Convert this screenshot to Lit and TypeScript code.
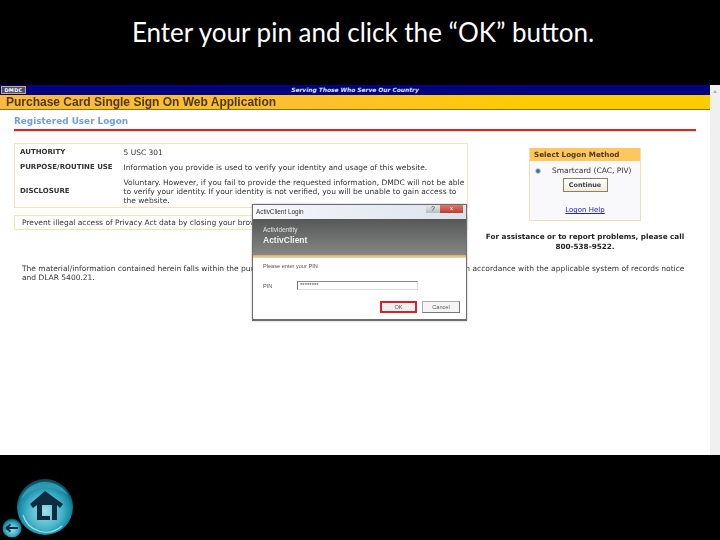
import { LitElement, html, css } from "lit";
import { customElement } from "lit/decorators.js";

@customElement("app-root")
export class AppRoot extends LitElement {
  static styles = css`
    :host { display: block; width: 720px; height: 540px; background: #000; overflow: hidden; position: relative; font-family: "DejaVu Sans", Verdana, sans-serif; }
    .title { height: 85px; box-sizing: border-box; padding: 15px 0 0 6px; text-align: center; color: #fff; font: 26px/34px Lato, sans-serif; }
    .shot { height: 370px; display: flex; background: #fff; position: relative; }
    .page { width: 710px; filter: blur(0.35px); color: #333; font-size: 7.5px; line-height: 9px; }
    .scroll { width: 10px; background: #f0f0f0; display: flex; justify-content: center; padding-top: 3px; box-sizing: border-box; }
    .scroll i { width: 0; height: 0; border: 2px solid transparent; border-bottom: 3px solid #b0b0b0; }
    .blue { height: 10px; background: #000080; display: flex; position: relative; justify-content: center; align-items: center; }
    .blue .slogan { font: italic bold 5.9px/10px "DejaVu Sans", sans-serif; color: #dfe6ff; }
    .dmdc { position: absolute; left: 1px; top: 1px; width: 25px; height: 8px; box-sizing: border-box; background: #4a4a90; border: 1px solid #c9b060; color: #fff; font: bold 5px/6px "DejaVu Sans", sans-serif; text-align: center; letter-spacing: .3px; }
    .yellow { height: 15px; box-sizing: border-box; background: linear-gradient(90deg, #fbb93f 0, #fdc02c 45%, #ffcc00 75%); border-bottom: 1px solid #85702a; padding-left: 6px; color: #4f3a0c; font: bold 12px/14px "Liberation Sans", sans-serif; }
    .heading { margin: 7px 14px 0 14px; height: 12px; border-bottom: 2px solid #cf2a2a; box-shadow: 0 1px 0 #e8e0c0; color: #6f9fd8; font-weight: 700; font-size: 8.9px; line-height: 9px; }
    .top { display: flex; margin: 12px 8px 0 14px; }
    .left { width: 454px; flex: none; }
    .box { border: 1px solid #f3e3b5; box-sizing: border-box; }
    .info { height: 65px; padding: 0.5px 5px 0 5px; display: grid; grid-template-columns: 103.5px 1fr; grid-template-rows: 15px 15px 33px; align-items: center; }
    .info b { color: #333; font-size: 7px; padding-top: 1px; }
    .info span { white-space: nowrap; }
    .prevent { margin-top: 7px; height: 15px; padding-left: 7px; line-height: 13px; white-space: nowrap; overflow: hidden; }
    .right { flex: 1; display: flex; flex-direction: column; align-items: center; padding-top: 5px; }
    .logon { width: 112px; height: 73px; box-sizing: border-box; background: #f9f9fb; border: 1px solid #f0e0b0; border-top: 0; display: flex; flex-direction: column; align-items: center; }
    .logon header { align-self: stretch; height: 13px; background: #fdc65e; color: #503a10; font-weight: 700; font-size: 7.2px; line-height: 13px; padding-left: 4px; }
    .radio { align-self: stretch; display: flex; align-items: center; gap: 11px; padding: 5px 0 0 5px; height: 9px; white-space: nowrap; }
    .radio i { width: 6px; height: 6px; border-radius: 50%; background: #3f6f9f; border: 1px solid #c5d5e5; box-sizing: border-box; }
    .btn { margin-top: 3px; width: 45px; height: 14px; box-sizing: border-box; background: linear-gradient(#fff, #f3ecd4); border: 1px solid #85806f; font-weight: 700; font-size: 6.4px; line-height: 12px; text-align: center; color: #2e3a50; }
    .help { margin-top: 14px; color: #2222bb; text-decoration: underline; font-size: 7px; }
    .assist { margin-top: 11px; text-align: center; font-weight: 700; color: #222; font-size: 7.25px; line-height: 10px; white-space: nowrap; }
    .notice { margin: 12px 0 0 22px; width: 670px; white-space: nowrap; }
    .dialog { position: absolute; left: 252px; top: 119px; width: 215px; height: 117px; box-sizing: border-box; background: #fff; border: 1px solid #6c6c6c; border-width: 1px 1px 2px 1px; box-shadow: 0 0 2px #bbb; filter: blur(0.35px); font: 6.4px/8px "Liberation Sans", sans-serif; color: #555; display: flex; flex-direction: column; }
    .dtitle { height: 14px; flex: none; background: linear-gradient(90deg, #f6f8fb, #dbe3ec); display: flex; align-items: center; padding-left: 3px; color: #333; }
    .dtitle span { flex: 1; }
    .mini { width: 14px; height: 8px; background: linear-gradient(#e8e8e8, #b8bcc2); text-align: center; line-height: 8px; align-self: flex-start; }
    .close { width: 23px; height: 8px; margin-right: 3px; background: linear-gradient(#e07a6a, #bb3a30); color: #fff; text-align: center; line-height: 8px; align-self: flex-start; }
    .band { height: 36px; flex: none; box-sizing: border-box; background: linear-gradient(#555857, #848786); padding: 7px 0 0 10px; color: #e3e3e3; }
    .band div:last-child { font-weight: 700; font-size: 8.5px; line-height: 12px; color: #f0f0f0; }
    .orange { height: 3px; flex: none; background: linear-gradient(#e9a64f, #e6d8c2); }
    .dbody { flex: 1; display: flex; flex-direction: column; padding: 4px 6px 0 10px; font-size: 5.6px; }
    .pinrow { display: flex; align-items: center; margin-top: 11px; height: 9px; }
    .pinrow label { width: 34px; }
    .pin { width: 121px; height: 9px; box-sizing: border-box; border: 1px solid #d9d9d9; border-left-color: #777; border-top-color: #888; font-size: 6px; line-height: 7px; padding-left: 2px; color: #444; }
    .actions { display: flex; justify-content: flex-end; gap: 5px; margin-top: 11px; }
    .actions div { height: 12px; width: 38px; box-sizing: border-box; border: 1px solid #aaa; border-bottom-color: #777; border-right-color: #777; text-align: center; line-height: 10px; background: #f5f5f5; }
    .actions .ok { width: 37px; border: 2px solid #d8202c; line-height: 8px; background: #f0f0f0; }
    .footer { height: 85px; position: relative; }
    .footer svg { position: absolute; left: 0; top: 0; }
  `;

  render() {
    return html`
      <div class="title">Enter your pin and click the “OK” button.</div>
      <div class="shot">
        <div class="page">
          <div class="blue"><div class="dmdc">DMDC</div><div class="slogan">Serving Those Who Serve Our Country</div></div>
          <div class="yellow">Purchase Card Single Sign On Web Application</div>
          <div class="heading">Registered User Logon</div>
          <div class="top">
            <div class="left">
              <div class="box info">
                <b>AUTHORITY</b><span>5 USC 301</span>
                <b>PURPOSE/ROUTINE USE</b><span>Information you provide is used to verify your identity and usage of this website.</span>
                <b>DISCLOSURE</b><span>Voluntary. However, if you fail to provide the requested information, DMDC will not be able<br />to verify your identity. If your identity is not verified, you will be unable to gain access to<br />the website.</span>
              </div>
              <div class="box prevent">Prevent illegal access of Privacy Act data by closing your browser when finished.</div>
            </div>
            <div class="right">
              <div class="logon">
                <header>Select Logon Method</header>
                <div class="radio"><i></i><span>Smartcard (CAC, PIV)</span></div>
                <div class="btn">Continue</div>
                <div class="help">Logon Help</div>
              </div>
              <div class="assist">For assistance or to report problems, please call<br />800-538-9522.</div>
            </div>
          </div>
          <div class="notice">The material/information contained herein falls within the purview of the Privacy Act and 5 USC 301 and will be used in accordance with the applicable system of records notice<br />and DLAR 5400.21.</div>
        </div>
        <div class="scroll"><i></i></div>
        <div class="dialog">
          <div class="dtitle"><span>ActivClient Login</span><div class="mini">?</div><div class="close">×</div></div>
          <div class="band"><div>ActivIdentity</div><div>ActivClient</div></div>
          <div class="orange"></div>
          <div class="dbody">
            <div>Please enter your PIN</div>
            <div class="pinrow"><label>PIN</label><div class="pin">********</div></div>
            <div class="actions"><div class="ok">OK</div><div>Cancel</div></div>
          </div>
        </div>
      </div>
      <div class="footer">
        <svg width="100" height="85" viewBox="0 0 100 85">
          <defs>
            <radialGradient id="orb" cx="50%" cy="58%" r="55%">
              <stop offset="0" stop-color="#a4dfe8" />
              <stop offset=".55" stop-color="#48b4ca" />
              <stop offset=".85" stop-color="#128aa4" />
              <stop offset="1" stop-color="#0a4a5e" />
            </radialGradient>
            <linearGradient id="gloss" x1="0" y1="0" x2="0" y2="1">
              <stop offset="0" stop-color="#2a94ac" />
              <stop offset="1" stop-color="#3aa6be" />
            </linearGradient>
          </defs>
          <circle cx="45" cy="52" r="28" fill="url(#orb)" />
          <path d="M21 44 A26 26 0 0 1 68 40 A34 34 0 0 0 21 44 Z" fill="url(#gloss)" />
          <path d="M23 60 A24 24 0 0 0 62 71" fill="none" stroke="#c4edf2" stroke-width="1.2" opacity=".8" />
          <path fill="#0d2c42" d="M45 36 L30 49 L33 53 L37 50 V65 H50 V61 H42 V50 H52 V65 H57 V50 L60 53 L63 49 Z" />
          <circle cx="12" cy="73" r="9.5" fill="url(#orb)" />
          <path d="M6 73 H18 M6 73 L10.5 69.5 M6 73 L10.5 76.5" stroke="#0d2c42" stroke-width="2" fill="none" />
        </svg>
      </div>
    `;
  }
}
